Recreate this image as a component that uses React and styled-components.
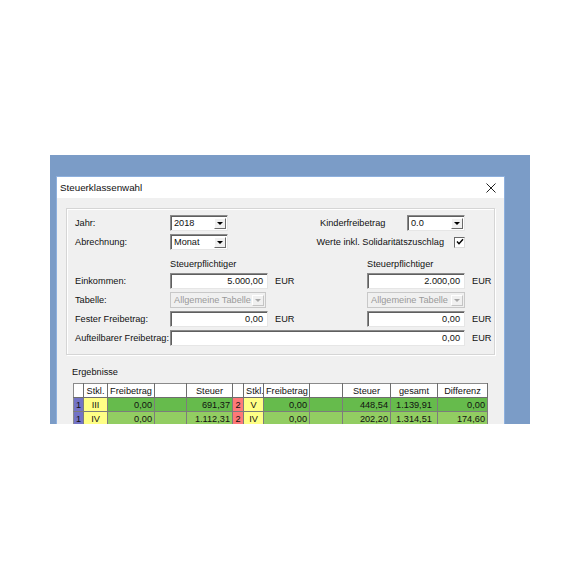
import React from 'react';
import styled, { createGlobalStyle } from 'styled-components';

const GlobalStyle = createGlobalStyle`
  html, body { margin: 0; padding: 0; background: #fff; }
  body { font-family: 'Liberation Sans', Arial, sans-serif; }
`;

const Page = styled.div`
  width: 580px;
  height: 580px;
  box-sizing: border-box;
  padding: 155px 0 0 50px;
  background: #fff;
`;

const Desktop = styled.div`
  width: 480px;
  height: 269px;
  box-sizing: border-box;
  padding: 21px 0 0 6px;
  background: #7b9cc7;
  overflow: hidden;
`;

const Dialog = styled.div`
  width: 449px;
  box-sizing: border-box;
  background: #f0f0f0;
  border: 1px solid #8eb0dd;
  border-bottom: none;
  font-size: 9.2px;
  color: #111;
`;

const TitleBar = styled.div`
  height: 21px;
  background: #fff;
  display: flex;
  align-items: center;
  justify-content: space-between;
  padding: 0 8px 0 3px;
  font-size: 9.8px;
`;

const Body = styled.div`
  padding: 10px 9px 0 9px;
`;

const GroupBox = styled.div`
  border: 1px solid #d5d5d5;
  box-shadow: inset 1px 1px 0 #fff, 1px 1px 0 #fff;
  padding: 6px 0 8px 8px;
  display: flex;
  flex-direction: column;
  gap: 3px;
`;

const Row = styled.div`
  display: grid;
  grid-template-columns: 95px 98px 99px 98px auto;
  height: ${p => p.$h || 16}px;
  align-items: ${p => p.$end ? 'end' : 'center'};
`;

const Label = styled.span`
  white-space: nowrap;
  padding-left: ${p => p.$pad || 0}px;
  line-height: 12px;
`;

const Unit = styled.span`
  padding-left: 7px;
`;

const Span = styled.div`
  grid-column: ${p => p.$cols};
  display: flex;
  align-items: center;
  justify-content: ${p => p.$justify || 'flex-start'};
  height: 16px;
`;

const sunken = `
  border: 1px solid;
  border-color: #8a8a8a #e6e6e6 #e6e6e6 #8a8a8a;
  box-shadow: inset 1px 1px 0 #5f5f5f;
`;

const Combo = styled.div`
  width: ${p => p.$w}px;
  height: 16px;
  box-sizing: border-box;
  display: flex;
  align-items: center;
  justify-content: space-between;
  padding: 0 1px 0 3px;
  white-space: nowrap;
  overflow: hidden;
  ${p => p.$disabled
    ? 'border: 1px solid #c8c8c8; background: #f0f0f0; color: #9a9a9a;'
    : sunken + 'background: #fff;'}
`;

const ArrowBtn = styled.span`
  flex: none;
  width: 12px;
  height: 11px;
  box-sizing: border-box;
  display: flex;
  align-items: center;
  justify-content: center;
  background: #f0f0f0;
  border: 1px solid;
  border-color: ${p => p.$disabled ? '#fff #c4c4c4 #c4c4c4 #fff' : '#fff #6a6a6a #6a6a6a #fff'};

  &::after {
    content: '';
    border-left: 3px solid transparent;
    border-right: 3px solid transparent;
    border-top: 3px solid ${p => p.$disabled ? '#a8a8a8' : '#000'};
  }
`;

const Field = styled.div`
  width: ${p => p.$w}px;
  height: 16px;
  box-sizing: border-box;
  ${sunken}
  background: #fff;
  display: flex;
  align-items: center;
  justify-content: flex-end;
  padding-right: 4px;
`;

const CheckBox = styled.span`
  width: 11px;
  height: 11px;
  box-sizing: border-box;
  margin-left: 10px;
  background: #fff;
  border: 1px solid;
  border-color: #6a6a6a #dcdcdc #dcdcdc #6a6a6a;
  display: flex;
  align-items: center;
  justify-content: center;
`;

const SectionTitle = styled.div`
  margin: 11px 0 0 6px;
  height: 12px;
  line-height: 12px;
`;

const Grid = styled.table`
  margin: 5px 0 0 7px;
  width: 414px;
  table-layout: fixed;
  border-collapse: collapse;
  font-size: 9.2px;
  color: #111;
  border-left: 1px solid #8a8a8a;
  border-top: 1px solid #8a8a8a;
`;

const Th = styled.th`
  height: 13px;
  padding: 0 2px;
  font-weight: normal;
  background: #fff;
  border-right: 1px solid #6e6e6e;
  border-bottom: 1px solid #6e6e6e;
  text-align: center;
  white-space: nowrap;
  overflow: hidden;
`;

const Td = styled.td`
  height: 13px;
  padding: 0 2px;
  background: ${p => p.$bg};
  border-right: 1px solid #7c7c7c;
  border-bottom: 1px solid #7c7c7c;
  text-align: ${p => p.$align || 'right'};
  white-space: nowrap;
  overflow: hidden;
`;

const cols = [10, 24, 47, 32, 46, 11, 20, 46, 33, 48, 47, 50];

const rows = [
  { green: '#66bb4c', a: 'III', fa: '0,00', sa: '691,37', b: 'V', fb: '0,00', sb: '448,54', total: '1.139,91', diff: '0,00' },
  { green: '#92cd62', a: 'IV', fa: '0,00', sa: '1.112,31', b: 'IV', fb: '0,00', sb: '202,20', total: '1.314,51', diff: '174,60' },
];

function Select({ w, value, disabled }) {
  return (
    <Combo $w={w} $disabled={disabled}>
      <span>{value}</span>
      <ArrowBtn $disabled={disabled} />
    </Combo>
  );
}

export default function App() {
  return (
    <Page>
      <GlobalStyle />
      <Desktop>
        <Dialog>
          <TitleBar>
            <span>Steuerklassenwahl</span>
            <svg width="10" height="10" viewBox="0 0 10 10">
              <path d="M0.5 0.5 L9.5 9.5 M9.5 0.5 L0.5 9.5" stroke="#222" strokeWidth="1" fill="none" />
            </svg>
          </TitleBar>
          <Body>
            <GroupBox>
              <Row>
                <Label>Jahr:</Label>
                <Select w={58} value="2018" />
                <Span $cols="3 / 5" $justify="space-between">
                  <Label $pad={52}>Kinderfreibetrag</Label>
                  <Select w={58} value="0.0" />
                </Span>
              </Row>
              <Row>
                <Label>Abrechnung:</Label>
                <Select w={58} value="Monat" />
                <Span $cols="3 / 5" $justify="flex-end">
                  <Label>Werte inkl. Solidaritätszuschlag</Label>
                  <CheckBox>
                    <svg width="8" height="8" viewBox="0 0 8 8">
                      <path d="M1 3.5 L3 5.8 L7 1.2" stroke="#000" strokeWidth="1.4" fill="none" />
                    </svg>
                  </CheckBox>
                </Span>
              </Row>
              <Row $h={17} $end>
                <span />
                <Label>Steuerpflichtiger</Label>
                <span />
                <Label>Steuerpflichtiger</Label>
              </Row>
              <Row>
                <Label>Einkommen:</Label>
                <Field $w={98}>5.000,00</Field>
                <Unit>EUR</Unit>
                <Field $w={98}>2.000,00</Field>
                <Unit>EUR</Unit>
              </Row>
              <Row>
                <Label>Tabelle:</Label>
                <Select w={96} value="Allgemeine Tabelle" disabled />
                <span />
                <Select w={98} value="Allgemeine Tabelle" disabled />
              </Row>
              <Row>
                <Label>Fester Freibetrag:</Label>
                <Field $w={98}>0,00</Field>
                <Unit>EUR</Unit>
                <Field $w={98}>0,00</Field>
                <Unit>EUR</Unit>
              </Row>
              <Row>
                <Label>Aufteilbarer Freibetrag:</Label>
                <Span $cols="2 / 5">
                  <Field $w={295}>0,00</Field>
                </Span>
                <Unit>EUR</Unit>
              </Row>
            </GroupBox>

            <SectionTitle>Ergebnisse</SectionTitle>
            <Grid>
              <colgroup>
                {cols.map((w, i) => <col key={i} style={{ width: w }} />)}
              </colgroup>
              <thead>
                <tr>
                  <Th />
                  <Th>Stkl.</Th>
                  <Th>Freibetrag</Th>
                  <Th />
                  <Th>Steuer</Th>
                  <Th />
                  <Th>Stkl.</Th>
                  <Th>Freibetrag</Th>
                  <Th />
                  <Th>Steuer</Th>
                  <Th>gesamt</Th>
                  <Th>Differenz</Th>
                </tr>
              </thead>
              <tbody>
                {rows.map((r, i) => (
                  <tr key={i}>
                    <Td $bg="#7373c6" $align="center">1</Td>
                    <Td $bg="#ffff86" $align="center">{r.a}</Td>
                    <Td $bg={r.green}>{r.fa}</Td>
                    <Td $bg={r.green} />
                    <Td $bg={r.green}>{r.sa}</Td>
                    <Td $bg="#ff7878" $align="center">2</Td>
                    <Td $bg="#ffff86" $align="center">{r.b}</Td>
                    <Td $bg={r.green}>{r.fb}</Td>
                    <Td $bg={r.green} />
                    <Td $bg={r.green}>{r.sb}</Td>
                    <Td $bg={r.green} $align="center">{r.total}</Td>
                    <Td $bg={r.green}>{r.diff}</Td>
                  </tr>
                ))}
              </tbody>
            </Grid>
          </Body>
        </Dialog>
      </Desktop>
    </Page>
  );
}
